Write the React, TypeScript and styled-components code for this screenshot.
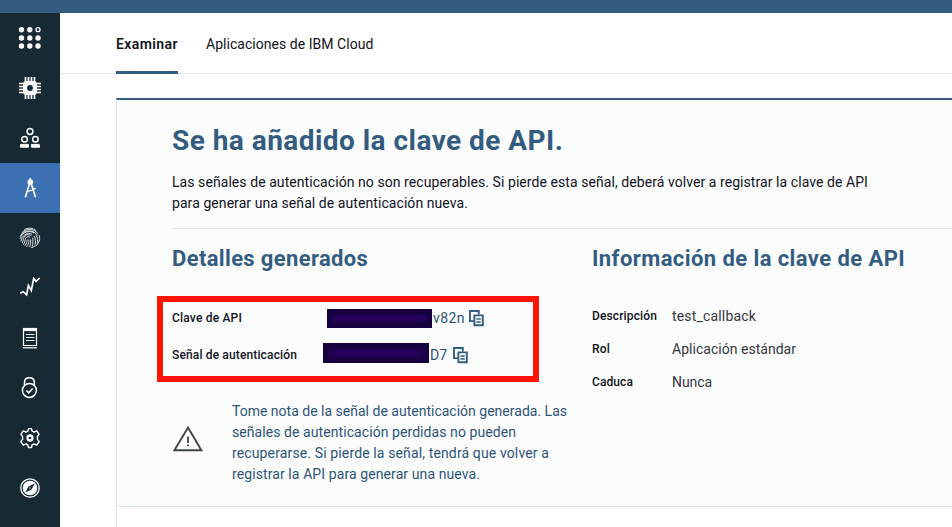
import React from 'react';
import styled, { createGlobalStyle } from 'styled-components';

const colors = {
  bar: '#345c80',
  rail: '#172a34',
  active: '#3d70b2',
  line: '#dfe9e9',
  panel: '#fbfdfd',
  ink: '#121222',
  value: '#36363f',
  slate: '#2f5376',
  alert: '#ff1500',
};

const GlobalStyle = createGlobalStyle`
  * { box-sizing: border-box; }
  html, body { margin: 0; padding: 0; overflow: hidden; background: #fff; }
  body { font-family: Roboto, "Liberation Sans", sans-serif; font-size: 14px; color: ${colors.ink}; }
  h1, h2, p, dl, dt, dd { margin: 0; }
`;

const Page = styled.div`
  display: flex;
  flex-direction: column;
  width: 100%;
  height: 527px;
  overflow: hidden;
`;

const TopBar = styled.header`
  flex: 0 0 13px;
  background: ${colors.bar};
`;

const Body = styled.div`
  display: flex;
  flex: 1;
  min-height: 0;
`;

const Rail = styled.nav`
  flex: 0 0 60px;
  display: flex;
  flex-direction: column;
  background: ${colors.rail};
`;

const RailItem = styled.a<{ $active?: boolean }>`
  display: flex;
  align-items: center;
  justify-content: center;
  height: 50px;
  color: #fff;
  background: ${(p) => (p.$active ? colors.active : 'transparent')};
  svg { display: block; }
`;

const Main = styled.main`
  flex: 1;
  min-width: 0;
  display: flex;
  flex-direction: column;
`;

const Tabs = styled.div`
  display: flex;
  gap: 28px;
  flex: 0 0 61px;
  height: 61px;
  min-height: 0;
  padding-left: 56px;
  border-bottom: 1px solid ${colors.line};
`;

const Tab = styled.a<{ $active?: boolean; $track: number }>`
  height: 61px;
  line-height: 63px;
  white-space: nowrap;
  letter-spacing: ${(p) => p.$track}px;
  font-weight: ${(p) => (p.$active ? 600 : 400)};
  border-bottom: ${(p) => (p.$active ? `3px solid ${colors.bar}` : '0')};
`;

const Card = styled.section`
  flex: 1;
  margin: 24px 0 0 56px;
  border-top: 2px solid ${colors.bar};
  border-left: 1px solid ${colors.line};
`;

const Panel = styled.div`
  height: 407px;
  padding: 23px 0 0 55px;
  background: ${colors.panel};
  border-bottom: 1px solid ${colors.line};
`;

const Title = styled.h1`
  height: 49px;
  line-height: 36px;
  font-size: 28px;
  font-weight: 700;
  letter-spacing: 0.46px;
  color: ${colors.bar};
  white-space: nowrap;
`;

const Intro = styled.p`
  height: 57px;
  line-height: 21px;
  border-bottom: 1px solid ${colors.line};
`;

const Line = styled.span<{ $track: number }>`
  display: block;
  white-space: nowrap;
  letter-spacing: ${(p) => p.$track}px;
`;

const Columns = styled.div`
  display: grid;
  grid-template-columns: 420px 1fr;
`;

const Heading = styled.h2<{ $track: number }>`
  padding-top: 15px;
  height: 67px;
  line-height: 30px;
  font-size: 22px;
  font-weight: 700;
  letter-spacing: ${(p) => p.$track}px;
  color: ${colors.bar};
  white-space: nowrap;
`;

const Highlight = styled.div`
  width: 382px;
  height: 86px;
  margin-left: -15px;
  padding: 0 9px;
  border: 6px solid ${colors.alert};
`;

const Secret = styled.div<{ $height: number; $indent: number }>`
  display: grid;
  grid-template-columns: ${(p) => p.$indent}px auto auto 1fr;
  align-items: center;
  height: ${(p) => p.$height}px;
`;

const Label = styled.dt<{ $track: number }>`
  font-size: 12px;
  font-weight: 500;
  letter-spacing: ${(p) => p.$track}px;
  white-space: nowrap;
`;

const Redaction = styled.span<{ $width: number; $height: number; $lift: number }>`
  width: ${(p) => p.$width}px;
  height: ${(p) => p.$height}px;
  margin-bottom: ${(p) => p.$lift}px;
  background: #22005a;
  border: 6px solid #16003f;
`;

const Tail = styled.span<{ $gap: number; $track: number }>`
  padding-left: ${(p) => p.$gap}px;
  letter-spacing: ${(p) => p.$track}px;
  color: ${colors.slate};
`;

const CopyButton = styled.span<{ $gap: number }>`
  padding: 2px 0 0 ${(p) => p.$gap}px;
  svg { display: block; }
`;

const Notice = styled.div`
  display: grid;
  grid-template-columns: 60px 1fr;
  margin-top: 19px;
  line-height: 21px;
  color: ${colors.slate};
`;

const NoticeIcon = styled.div`
  padding-top: 24px;
  svg { display: block; }
`;

const Facts = styled.dl`
  display: grid;
  grid-template-columns: 80px 1fr;
  grid-auto-rows: 33px;
  margin-top: 3px;
  align-items: center;
`;

const Value = styled.dd<{ $track: number }>`
  padding-top: 1px;
  letter-spacing: ${(p) => p.$track}px;
  color: ${colors.value};
`;

const GridIcon = () => (
  <svg width="24" height="24" viewBox="0 0 24 24" fill="currentColor">
    {[3.7, 12, 20].map((y) =>
      [3.5, 11.8, 20].map((x) =>
        x === 20 && y === 3.7 ? (
          <circle key={`${x}-${y}`} cx={x} cy={y} r="2" fill="none" stroke="currentColor" strokeWidth="1.3" />
        ) : (
          <circle key={`${x}-${y}`} cx={x} cy={y} r="2.7" />
        ),
      ),
    )}
  </svg>
);

const ChipIcon = () => (
  <svg width="24" height="24" viewBox="0 0 24 24">
    <path
      d="M7.5 1v22M10.5 1v22M13.5 1v22M16.5 1v22M1 7.5h22M1 10.5h22M1 13.5h22M1 16.5h22"
      stroke="currentColor"
      strokeWidth="1.7"
    />
    <path d="M7 5h10l2 2v10l-2 2H7l-2-2V7z" fill="currentColor" />
    <circle cx="12" cy="12" r="2.9" fill={colors.rail} />
  </svg>
);

const MembersIcon = () => (
  <svg width="22" height="22" viewBox="0 0 22 22" fill="none" stroke="currentColor" strokeWidth="1.5">
    <circle cx="11" cy="4.5" r="2.9" />
    <circle cx="5.6" cy="12.2" r="2.8" />
    <circle cx="16.4" cy="12.2" r="2.8" />
    <path d="M1.6 17.4h7.8v2.8H1.4zM12.4 17.4h7.8l.4 2.8h-8.2z" fill="currentColor" strokeWidth="1" />
  </svg>
);

const CompassToolIcon = () => (
  <svg width="22" height="22" viewBox="0 0 22 22" fill="none" stroke="currentColor" strokeWidth="1.6">
    <circle cx="11.3" cy="5" r="2" fill="currentColor" />
    <path d="M11.3 1v3M10.5 6.5L6.3 20.3M12.2 6.5L16.5 20.3" />
    <path d="M8 14c3.2.3 5.8-.6 8.6-3" strokeWidth="1.4" />
  </svg>
);

const FingerprintIcon = () => (
  <svg width="22" height="22" viewBox="0 0 22 22" fill="none" stroke="currentColor" strokeWidth=".85">
    <path d="M5 3.2C8.7.2 14.4.6 17.4 4M2.7 5.9C6.4 1.2 15.2 1.2 18.8 6.6M1.4 9.2C4.2 2.5 14.4 2 18.8 8.6M20.2 8.4c.7 2 .6 4.1.1 5.8" />
    <path d="M1.2 11.8C2.6 5 10.6 2.7 15.3 6.2M17 8.3c1.7 2.4 1.9 5.5 1.2 8.4M2 14.3C2.4 8.7 8.4 4.9 13.2 7.2M15 9c1.9 2.6 1.8 6.5.9 9.6" />
    <path d="M3.2 16c1.2-1.8.6-4 2-6 2-2.8 5.4-3 7.2-1.1M13.5 10.6c1 2.7.3 6-.3 9M4.4 17.6c1.8-2.1 1.2-4.4 2.4-6.4 1-1.6 3-1.8 4.2-.9" />
    <path d="M5.8 18.9c2.3-2.4 1.6-5.1 2.7-6.3M11.6 12.4c.6 2.6-.2 5.3-1 7.8M7.6 19.9c2-2.1 2.6-4.8 2.3-7.4" />
    <path d="M16.5 19.2c1.8-1.4 3-3.2 3.6-5.2M12.2 20.6c1.2-.2 2.4-.6 3.4-1.2" />
  </svg>
);

const TrendIcon = () => (
  <svg width="22" height="22" viewBox="0 0 22 22" fill="none" stroke="currentColor" strokeWidth="1.7">
    <path d="M1.2 16.2l3-1.4 1.4 1 2 2L9.4 8.4l2.9 5.1L14.7 1.4l2.4 3 3.5-3.4" />
  </svg>
);

const ReportIcon = () => (
  <svg width="16" height="22" viewBox="0 0 16 22" fill="none" stroke="currentColor">
    <path d="M1.5 1v17.5h13V1" strokeWidth="1.2" />
    <path d="M1 2.5h14" strokeWidth="3.2" />
    <path d="M4 7.5h8.5M4 10.5h8.5M4 13.5h8.5" strokeWidth=".9" />
    <path d="M1 20.8h14" strokeWidth="1.2" />
  </svg>
);

const LockIcon = () => (
  <svg width="18" height="22" viewBox="0 0 18 22" fill="none" stroke="currentColor" strokeWidth="1.5">
    <circle cx="8.4" cy="13.4" r="7" />
    <path d="M3.5 8.2V5.4c0-2.8 2-4.6 4.9-4.6s4.9 1.8 4.9 4.6v2.8" />
    <path d="M5.4 13.4l2.3 2.4 3.9-4.2" />
  </svg>
);

const GearIcon = () => (
  <svg width="22" height="22" viewBox="0 0 22 22" fill="none" stroke="currentColor" strokeLinejoin="round">
    <path
      d="M9.5 1.6h3l.6 2.6c.7.2 1.3.6 1.9 1l2.7-1.4 2.4 3.6-1.7 2.1v2.9l1.8 2.2-2.5 3.6-2.7-1.3c-.6.5-1.2.8-1.9 1l-.6 2.6h-3l-.6-2.6c-.7-.2-1.3-.5-1.9-1l-2.7 1.3-2.5-3.6 1.8-2.2V9.5L1.9 7.4l2.4-3.6L7 5.2c.6-.4 1.2-.8 1.9-1z"
      strokeWidth="1.4"
    />
    <circle cx="11" cy="11" r="2.5" strokeWidth="2.3" />
  </svg>
);

const ExploreIcon = () => (
  <svg width="22" height="22" viewBox="0 0 22 22">
    <circle cx="11" cy="11" r="9.2" fill="none" stroke="currentColor" strokeWidth="1.3" />
    <circle cx="11" cy="11" r="7.3" fill="currentColor" />
    <path d="M15.6 6.4L12.6 12.6 6.4 15.6 9.4 9.4z" fill={colors.rail} />
    <circle cx="11" cy="11" r="1" fill="#8796a0" />
  </svg>
);

const CopyIcon = () => (
  <svg width="15" height="17" viewBox="0 0 15 17" fill="none" stroke={colors.bar}>
    <path d="M5 11.1H1V1h8.8v3.6" strokeWidth="1.9" />
    <path d="M5.4 5.4h8.4v9.9H5.4z" strokeWidth="1.9" />
    <path d="M7.4 9h4.4M7.4 12h4.4" strokeWidth="1.5" />
  </svg>
);

const WarningIcon = () => (
  <svg width="32" height="28" viewBox="0 0 32 28" fill="none" stroke="#3c4646">
    <path d="M16 2.6L29.4 25.3H2.4z" strokeWidth="1.9" />
    <path d="M16 11.5v6.4M16 19.4v1.8" strokeWidth="1.8" />
  </svg>
);

const railItems = [
  { id: 'apps', Icon: GridIcon },
  { id: 'devices', Icon: ChipIcon },
  { id: 'members', Icon: MembersIcon },
  { id: 'access', Icon: CompassToolIcon, active: true },
  { id: 'identity', Icon: FingerprintIcon },
  { id: 'usage', Icon: TrendIcon },
  { id: 'rules', Icon: ReportIcon },
  { id: 'security', Icon: LockIcon },
  { id: 'settings', Icon: GearIcon },
  { id: 'explore', Icon: ExploreIcon },
];

export default function App() {
  return (
    <>
      <GlobalStyle />
      <Page>
        <TopBar />
        <Body>
          <Rail>
            {railItems.map(({ id, Icon, active }) => (
              <RailItem key={id} $active={active}>
                <Icon />
              </RailItem>
            ))}
          </Rail>
          <Main>
            <Tabs>
              <Tab $active $track={0.41}>Examinar</Tab>
              <Tab $track={0.04}>Aplicaciones de IBM Cloud</Tab>
            </Tabs>
            <Card>
              <Panel>
                <Title>Se ha añadido la clave de API.</Title>
                <Intro>
                  <Line $track={0.067}>
                    Las señales de autenticación no son recuperables. Si pierde esta señal, deberá volver a registrar la clave de API
                  </Line>
                  <Line $track={0.072}>para generar una señal de autenticación nueva.</Line>
                </Intro>
                <Columns>
                  <div>
                    <Heading $track={0.35}>Detalles generados</Heading>
                    <Highlight>
                      <Secret $height={31} $indent={155}>
                        <Label $track={0.188}>Clave de API</Label>
                        <Redaction $width={105} $height={19} $lift={-2} />
                        <Tail $gap={1} $track={0.4}>v82n</Tail>
                        <CopyButton $gap={4}><CopyIcon /></CopyButton>
                      </Secret>
                      <Secret $height={43} $indent={151}>
                        <Label $track={0.141}>Señal de autenticación</Label>
                        <Redaction $width={106} $height={20} $lift={3} />
                        <Tail $gap={1} $track={0}>D7</Tail>
                        <CopyButton $gap={6}><CopyIcon /></CopyButton>
                      </Secret>
                    </Highlight>
                    <Notice>
                      <NoticeIcon><WarningIcon /></NoticeIcon>
                      <p>
                        <Line $track={0.006}>Tome nota de la señal de autenticación generada. Las</Line>
                        <Line $track={0.072}>señales de autenticación perdidas no pueden</Line>
                        <Line $track={0.131}>recuperarse. Si pierde la señal, tendrá que volver a</Line>
                        <Line $track={0.094}>registrar la API para generar una nueva.</Line>
                      </p>
                    </Notice>
                  </div>
                  <div>
                    <Heading $track={0.415}>Información de la clave de API</Heading>
                    <Facts>
                      <Label $track={0.13}>Descripción</Label>
                      <Value $track={0.17}>test_callback</Value>
                      <Label $track={0.19}>Rol</Label>
                      <Value $track={0.026}>Aplicación estándar</Value>
                      <Label $track={0.086}>Caduca</Label>
                      <Value $track={-0.07}>Nunca</Value>
                    </Facts>
                  </div>
                </Columns>
              </Panel>
            </Card>
          </Main>
        </Body>
      </Page>
    </>
  );
}
